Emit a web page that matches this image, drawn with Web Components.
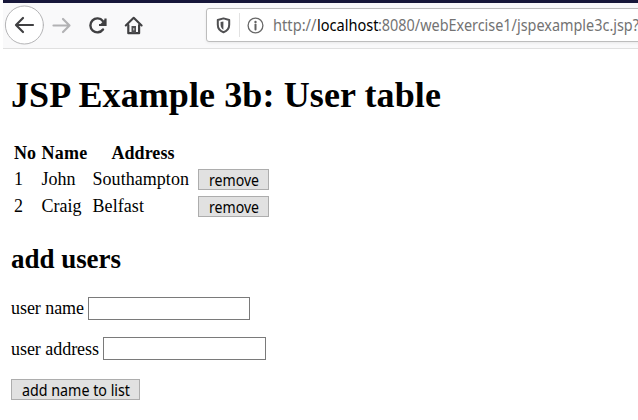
<!DOCTYPE html>
<html lang="en"><head><meta charset="utf-8"><title>JSP Example 3b</title>
<style>html,body{margin:0;background:#fff;overflow:hidden}</style></head><body>
<app-page></app-page>
<script>
const define=(name,html)=>customElements.define(name,class extends HTMLElement{
  constructor(){super();this.attachShadow({mode:'open'}).innerHTML=html;}
});
// Text run that spans its "w" width: by tracking, or by condensing the glyphs when "condense" is set
customElements.define('fit-text',class extends HTMLElement{
  connectedCallback(){
    if(this.shadowRoot)return;
    this.attachShadow({mode:'open'}).innerHTML='<style>:host{display:inline-block;white-space:pre;text-align:left}span{display:inline-block;transform-origin:0 50%}</style><span><slot></slot></span>';
    const s=this.shadowRoot.querySelector('span'),w=+this.getAttribute('w');
    requestAnimationFrame(()=>{
      const n=this.textContent.length,now=s.getBoundingClientRect().width;
      if(this.hasAttribute('condense')){this.style.width=w+'px';s.style.transform='scaleX('+w/now+')';}
      else s.style.letterSpacing=(w-now)/n+'px';
    });
  }
});
define('push-button',`<style>:host{display:block;height:21px}
button{all:unset;box-sizing:border-box;display:block;width:100%;height:21px;border:1px solid #adadad;background:#e1e1e1;color:#000;text-align:center;font:15.5px/20px "Noto Sans","Open Sans",sans-serif}</style><button><slot></slot></button>`);
define('form-row',`<style>:host{display:flex;height:26px;align-items:flex-start}
.l{line-height:26px;width:var(--label)}
input{box-sizing:border-box;width:var(--field);height:23px;margin:var(--drop) 0 0;padding:1px 3px;border:1px solid #7a7a7a;border-radius:0;background:#fff;outline:0}</style><span class="l"><slot></slot></span><input type="text">`);
define('user-table',`<style>:host{display:block;margin-left:3px}
.r{display:grid;grid-template-columns:27.5px 51px 105.5px 71px;height:27px;line-height:26px}
.h{height:26px;font-weight:bold}.h span:nth-child(3){padding-left:19px}
push-button{margin-top:3px}</style>
<div class="r h"><span><fit-text w="22">No</fit-text></span><span><fit-text w="46">Name</fit-text></span><span><fit-text w="63">Address</fit-text></span></div>
<div class="r"><span>1</span><span><fit-text w="34">John</fit-text></span><span><fit-text w="96.5">Southampton</fit-text></span><push-button><fit-text condense w="50">remove</fit-text></push-button></div>
<div class="r"><span>2</span><span><fit-text w="40">Craig</fit-text></span><span><fit-text w="51.5">Belfast</fit-text></span><push-button><fit-text condense w="50">remove</fit-text></push-button></div>`);
define('address-bar',`<style>:host{display:flex;box-sizing:border-box;width:450px;height:34px;border:1px solid #bdbdbd;border-radius:3px;background:#fff;align-items:center;box-shadow:0 1px 3px #0001;flex:none}
svg{display:block;flex:none}.s{margin-left:9px}.d{width:1px;height:24px;background:#e2e2e2;margin:0 7px 0 8px}
.u{margin-left:9px;color:#737373;font:16px/34px "Noto Sans","Open Sans",sans-serif;white-space:nowrap;display:flex}
b{font-weight:normal;color:#000}</style>
<svg class="s" width="15" height="17" viewBox="0 0 15 17"><path d="M7.5 1.4 13.2 3v4.8c0 3.6-2.2 6.2-5.7 7.5C4 14 1.8 11.400 1.800 7.800V3z" fill="none" stroke="#505052" stroke-width="2" stroke-linejoin="round"/><path d="M7.400 4.400v8.300C5.500 11.500 4.600 10 4.600 7.800V5.100z" fill="#505052"/></svg>
<span class="d"></span>
<svg width="17" height="17" viewBox="0 0 17 17"><circle cx="8.500" cy="8.500" r="7.400" fill="none" stroke="#686868" stroke-width="1.300"/><circle cx="8.500" cy="4.900" r="1.200" fill="#606060"/><path d="M8.500 7.400v5" stroke="#606060" stroke-width="2" stroke-linecap="round"/></svg>
<span class="u"><fit-text condense w="43.500">http://</fit-text><b><fit-text condense w="61.500">localhost</fit-text></b><fit-text condense w="261">:8080/webExercise1/jspexample3c.jsp?</fit-text></span>`);
define('browser-bar',`<style>:host{display:flex;box-sizing:border-box;height:49px;margin-left:3px;border-top:3px solid #17173a;border-bottom:1px solid #e0e0e0;background:#f9f9fa;align-items:flex-start;overflow:hidden}
svg{display:block;flex:none;width:203px;height:45px}address-bar{margin-top:5px}</style>
<svg viewBox="3 3 203 45" fill="none" stroke="#404042" stroke-width="2.200" stroke-linecap="round" stroke-linejoin="round">
<circle cx="24.400" cy="25" r="19" fill="#fff" stroke="#b4b4b6" stroke-width="1"/>
<path d="M33 25H16.500M23 18l-7 7 7 7"/>
<path d="M53.500 25.500h16M63 19l6.500 6.500L63 32" stroke="#b2b2b4"/>
<path d="M102.800 20.900a7 7 0 1 0 .2 8.600" stroke-width="2.400"/><path d="M105.500 18.500v6.500h-6.500" stroke-width="2.200" stroke-linecap="butt" stroke-linejoin="miter"/><path d="m100 24.500 5-5v5z" fill="#404042" stroke="none"/>
<path d="m125.800 25.500 7.900-7.700 7.900 7.700" stroke-width="2.100"/><path d="M128.300 25v8.200h10.800V25"/><path d="M131.500 26h4.500v7h-4.500z" fill="#505052" stroke="none"/><path d="M133.800 28.500v1.500" stroke="#d8d8d8" stroke-width="1"/></svg>
<address-bar></address-bar>`);
define('app-page',`<style>:host{display:block;width:638px;height:420px;overflow:hidden;background:#fff;color:#000;font:18px/26px "Liberation Serif",serif}
main{padding:24px 0 0 11px}h1{font-size:36px;line-height:44px;margin:0 0 23px}h2{font-size:27px;line-height:36px;margin:21px 0 18px}
.n{--label:77px;--field:162px;--drop:2px}.a{--label:92px;--field:163px;--drop:1px;margin-top:15px}.b{width:129px;margin-top:17px}</style>
<browser-bar></browser-bar><main><h1><fit-text w="430">JSP Example 3b: User table</fit-text></h1>
<user-table></user-table><h2><fit-text w="110">add users</fit-text></h2>
<form-row class="n"><fit-text w="73">user name</fit-text></form-row>
<form-row class="a"><fit-text w="88">user address</fit-text></form-row>
<push-button class="b"><fit-text condense w="108">add name to list</fit-text></push-button></main>`);
</script></body></html>
